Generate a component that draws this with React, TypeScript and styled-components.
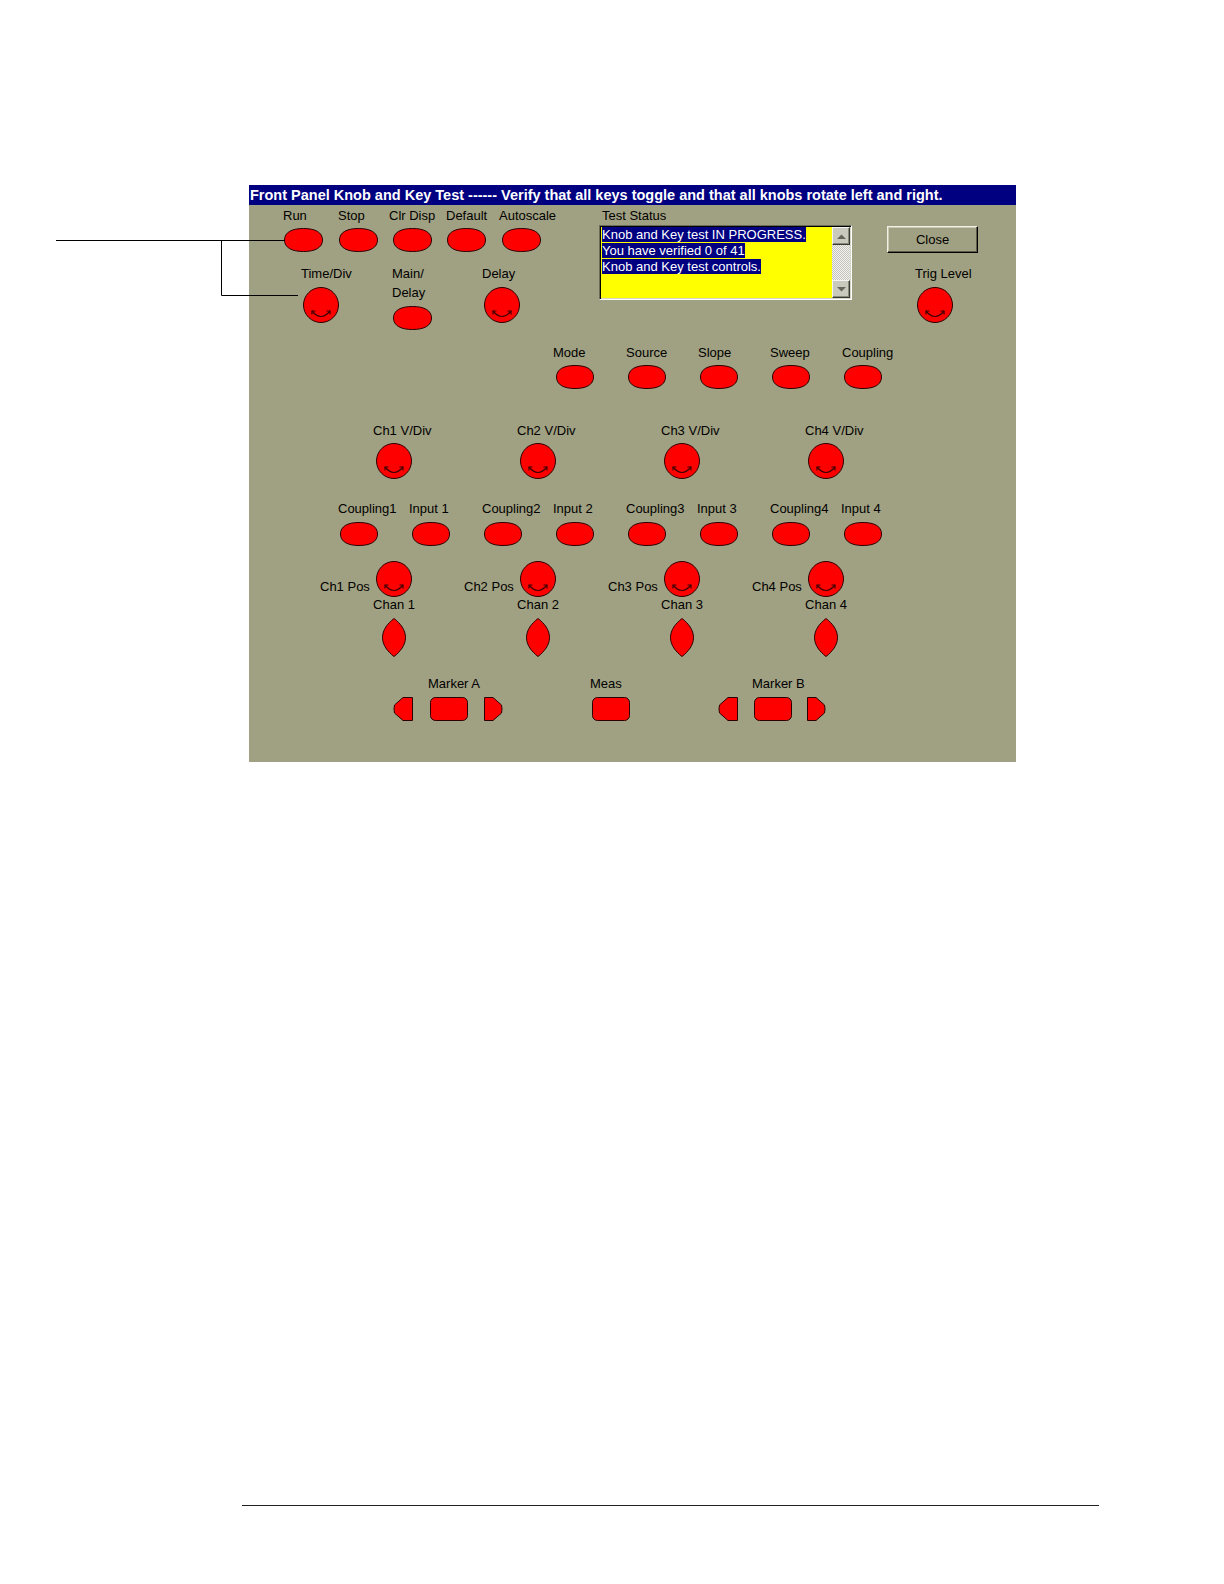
import React from "react";
import styled, { createGlobalStyle } from "styled-components";

const PANEL_BG = "#a0a082";
const RED = "#ff0000";
const EDGE = "#2a0000";
const ARROW = "#3a0000";

const GlobalStyle = createGlobalStyle`
  html, body {
    margin: 0;
    padding: 0;
    background: #ffffff;
  }
  body {
    font-family: "Liberation Sans", Arial, sans-serif;
  }
`;

const Page = styled.div`
  position: relative;
  width: 1224px;
  height: 1584px;
  padding-top: 185px;
  box-sizing: border-box;
  overflow: hidden;
`;

const Callout = styled.svg`
  position: absolute;
  left: 0;
  top: 0;
  pointer-events: none;
`;

const Dialog = styled.div`
  margin-left: 249px;
  width: 767px;
  height: 577px;
  background: ${PANEL_BG};
  color: #000;
  font-size: 13px;
  line-height: 15px;
  overflow: hidden;
`;

const TitleBar = styled.div`
  height: 20px;
  padding-left: 1px;
  background: #000080;
  color: #ffffff;
  font-weight: bold;
  font-size: 14.5px;
  line-height: 20px;
  white-space: nowrap;
  overflow: hidden;
`;

const FooterRule = styled.div`
  margin-top: 743px;
  margin-left: 242px;
  width: 857px;
  height: 1px;
  background: #222;
`;

/* ---------- generic control cell ---------- */

const Cell = styled.div`
  display: flex;
  flex-direction: column;
  align-items: flex-start;
`;

const Caption = styled.span<{ $dx?: number; $lh?: number; $mt?: number }>`
  display: block;
  white-space: nowrap;
  margin-left: ${(p) => p.$dx ?? 0}px;
  margin-top: ${(p) => p.$mt ?? 0}px;
  line-height: ${(p) => p.$lh ?? 15}px;
`;

const Slot = styled.div<{ $dx?: number; $gap: number }>`
  margin-left: ${(p) => p.$dx ?? 0}px;
  margin-top: ${(p) => p.$gap}px;
  line-height: 0;
`;

const KeyGrid = styled.div<{ $cols: string; $pl: number; $mt?: number }>`
  display: grid;
  grid-template-columns: ${(p) => p.$cols};
  align-items: start;
  padding-left: ${(p) => p.$pl}px;
  margin-top: ${(p) => p.$mt ?? 0}px;
`;

type ControlProps = {
  label: React.ReactNode;
  ldx?: number;
  wdx?: number;
  gap?: number;
  lh?: number;
  lmt?: number;
  children: React.ReactNode;
};

function Control({ label, ldx = 0, wdx = 0, gap = 5, lh, lmt, children }: ControlProps) {
  return (
    <Cell>
      <Caption $dx={ldx} $lh={lh} $mt={lmt}>
        {label}
      </Caption>
      <Slot $dx={wdx} $gap={gap}>
        {children}
      </Slot>
    </Cell>
  );
}

/* ---------- drawn keys and knobs ---------- */

const Svg = styled.svg`
  display: block;
  overflow: visible;
`;

function OvalKey({ w = 39, h = 24 }: { w?: number; h?: number }) {
  // slightly squared ellipse, like the low-res Windows ellipse
  const k = 0.64;
  const cx = w / 2;
  const cy = h / 2;
  const rx = w / 2 - 0.5;
  const ry = h / 2 - 0.5;
  const d = [
    `M${cx},${cy - ry}`,
    `C${cx + rx * k},${cy - ry} ${cx + rx},${cy - ry * k} ${cx + rx},${cy}`,
    `C${cx + rx},${cy + ry * k} ${cx + rx * k},${cy + ry} ${cx},${cy + ry}`,
    `C${cx - rx * k},${cy + ry} ${cx - rx},${cy + ry * k} ${cx - rx},${cy}`,
    `C${cx - rx},${cy - ry * k} ${cx - rx * k},${cy - ry} ${cx},${cy - ry}`,
    "Z",
  ].join(" ");
  return (
    <Svg width={w} height={h} viewBox={`0 0 ${w} ${h}`}>
      <path d={d} fill={RED} stroke={EDGE} />
    </Svg>
  );
}

function Knob() {
  return (
    <Svg width={36} height={36} viewBox="0 0 36 36">
      <circle cx={18} cy={18} r={17.5} fill={RED} stroke={EDGE} />
      <path d="M9,24 Q18,35 27,24" fill="none" stroke={ARROW} strokeWidth={1.2} />
      <path d="M12.5,24 L9,24 L9,27.5" fill="none" stroke={ARROW} strokeWidth={1.2} />
      <path d="M23.5,24 L27,24 L27,27.5" fill="none" stroke={ARROW} strokeWidth={1.2} />
    </Svg>
  );
}

function LensKey() {
  return (
    <Svg width={24} height={39} viewBox="0 0 24 39">
      <path
        d="M12,0.5 C18.5,5.5 23.5,12 23.5,19.5 C23.5,27 18.5,33.5 12,38.5 C5.5,33.5 0.5,27 0.5,19.5 C0.5,12 5.5,5.5 12,0.5 Z"
        fill={RED}
        stroke={EDGE}
      />
    </Svg>
  );
}

function RectKey({ w = 38 }: { w?: number }) {
  return (
    <Svg width={w} height={24} viewBox={`0 0 ${w} 24`}>
      <rect x={0.5} y={0.5} width={w - 1} height={23} rx={5} ry={5} fill={RED} stroke={EDGE} />
    </Svg>
  );
}

function ArrowKey({ dir }: { dir: "left" | "right" }) {
  const w = dir === "left" ? 20 : 19;
  const d =
    dir === "left"
      ? "M19.5,0.5 L10,0.5 L1.5,8 Q0.5,12 1.5,16 L10,23.5 L19.5,23.5 Z"
      : "M0.5,0.5 L9,0.5 L17.5,8 Q18.5,12 17.5,16 L9,23.5 L0.5,23.5 Z";
  return (
    <Svg width={w} height={24} viewBox={`0 0 ${w} 24`}>
      <path d={d} fill={RED} stroke={EDGE} />
    </Svg>
  );
}

/* ---------- top area ---------- */

const TopArea = styled.div`
  display: flex;
  align-items: flex-start;
`;

const KeysCluster = styled.div`
  flex: none;
  width: 350px;
  padding-top: 3px;
`;

const StatusBlock = styled.div`
  flex: none;
  width: 253px;
  padding-top: 3px;
`;

const ListBox = styled.div`
  margin-top: 2px;
  width: 253px;
  height: 75px;
  box-sizing: border-box;
  display: flex;
  border: 1px solid;
  border-color: #6b6b5a #ffffff #ffffff #6b6b5a;
  box-shadow: inset 1px 1px 0 #000000, inset -1px -1px 0 #d6d6c8;
  background: #ffff00;
`;

const ListText = styled.div`
  flex: 1;
  padding: 1px 0 0 2px;
  line-height: 16px;
`;

const ListLine = styled.div`
  white-space: nowrap;
  span {
    background: #000080;
    color: #ffffff;
  }
`;

const ScrollBar = styled.div`
  flex: none;
  width: 18px;
  margin: 1px 1px 1px 0;
  display: flex;
  flex-direction: column;
`;

const ScrollTrack = styled.div`
  flex: 1;
  background: repeating-conic-gradient(#c4c4bc 0 25%, #f2f2ee 0 50%) 0 0 / 2px 2px;
`;

const ScrollButton = styled.div`
  height: 18px;
  box-sizing: border-box;
  display: flex;
  align-items: center;
  justify-content: center;
  background: #c9c9be;
  border: 1px solid;
  border-color: #f4f4f0 #3a3a30 #3a3a30 #f4f4f0;
  box-shadow: inset -1px -1px 0 #8a8a7c;
`;

function ScrollArrow({ up }: { up?: boolean }) {
  return (
    <ScrollButton>
      <svg width={9} height={5} viewBox="0 0 9 5">
        <path d={up ? "M0,5 L4.5,0.5 L9,5 Z" : "M0,0 L4.5,4.5 L9,0 Z"} fill="#66665c" />
      </svg>
    </ScrollButton>
  );
}

const SideBlock = styled.div`
  flex: none;
  margin-left: 35px;
  padding-top: 21px;
  display: flex;
  flex-direction: column;
  align-items: flex-start;
`;

const CloseButton = styled.div`
  width: 91px;
  height: 27px;
  box-sizing: border-box;
  display: flex;
  align-items: center;
  justify-content: center;
  background: ${PANEL_BG};
  border: 1px solid;
  border-color: #f0f0e4 #000000 #000000 #f0f0e4;
  box-shadow: inset -1px -1px 0 #5c5c48, inset 1px 1px 0 #c8c8b4;
  font-size: 13px;
`;

/* ---------- lower rows ---------- */

const ChannelBank = styled.div`
  display: flex;
  padding-left: 71px;
  margin-top: 33.5px;
`;

const Strip = styled.div`
  flex: none;
  width: 144px;
  display: flex;
  flex-direction: column;
`;

const PosRow = styled.div`
  display: grid;
  grid-template-columns: 54px 40px;
  align-items: start;
  margin-top: 15px;
`;

const KnobStack = styled.div`
  display: flex;
  flex-direction: column;
  align-items: center;
  line-height: 15px;
`;

const LensSlot = styled.div`
  margin-top: 6px;
  line-height: 0;
`;

const KeyCluster = styled.div`
  display: flex;
  align-items: flex-start;
`;

const Spaced = styled.div<{ $ml: number }>`
  margin-left: ${(p) => p.$ml}px;
`;

const topKeys = [
  { label: "Run", wdx: 1 },
  { label: "Stop", wdx: 1 },
  { label: "Clr Disp", wdx: 4 },
  { label: "Default", wdx: 1 },
  { label: "Autoscale", wdx: 3 },
];

const triggerKeys = [
  { label: "Mode", wdx: 3 },
  { label: "Source", wdx: 2 },
  { label: "Slope", wdx: 2 },
  { label: "Sweep", wdx: 2 },
  { label: "Coupling", wdx: 2 },
];

const statusLines = [
  "Knob and Key test IN PROGRESS.",
  "You have verified 0 of 41",
  "Knob and Key test controls.",
];

function ChannelStrip({ n }: { n: number }) {
  return (
    <Strip>
      <Control label={`Ch${n} V/Div`} ldx={53} wdx={56} gap={5.5}>
        <Knob />
      </Control>
      <KeyGrid $cols="71px auto" $pl={18} $mt={21.5}>
        <Control label={`Coupling${n}`} wdx={2} gap={6.5}>
          <OvalKey w={38} />
        </Control>
        <Control label={`Input ${n}`} wdx={3} gap={6.5}>
          <OvalKey w={38} />
        </Control>
      </KeyGrid>
      <PosRow>
        <Caption $mt={17.5}>{`Ch${n} Pos`}</Caption>
        <KnobStack>
          <Knob />
          <Caption>{`Chan ${n}`}</Caption>
          <LensSlot>
            <LensKey />
          </LensSlot>
        </KnobStack>
      </PosRow>
    </Strip>
  );
}

function MarkerKeys({ gaps }: { gaps: [number, number] }) {
  return (
    <KeyCluster>
      <ArrowKey dir="left" />
      <Spaced $ml={gaps[0]}>
        <RectKey w={38} />
      </Spaced>
      <Spaced $ml={gaps[1]}>
        <ArrowKey dir="right" />
      </Spaced>
    </KeyCluster>
  );
}

export default function App() {
  return (
    <>
      <GlobalStyle />
      <Page>
        <Dialog>
          <TitleBar>
            Front Panel Knob and Key Test ------ Verify that all keys toggle and that all knobs rotate left and right.
          </TitleBar>

          <TopArea>
            <KeysCluster>
              <KeyGrid $cols="55px 51px 57px 53px auto" $pl={34}>
                {topKeys.map((k) => (
                  <Control key={k.label} label={k.label} wdx={k.wdx} gap={5}>
                    <OvalKey />
                  </Control>
                ))}
              </KeyGrid>
              <KeyGrid $cols="91px 90px auto" $pl={52} $mt={13.5}>
                <Control label="Time/Div" wdx={2} gap={6.5}>
                  <Knob />
                </Control>
                <Control
                  label={
                    <>
                      Main/
                      <br />
                      Delay
                    </>
                  }
                  lh={19}
                  lmt={-2}
                  wdx={1}
                  gap={4.5}
                >
                  <OvalKey />
                </Control>
                <Control label="Delay" wdx={2} gap={6.5}>
                  <Knob />
                </Control>
              </KeyGrid>
            </KeysCluster>

            <StatusBlock>
              <Caption $dx={3}>Test Status</Caption>
              <ListBox>
                <ListText>
                  {statusLines.map((l) => (
                    <ListLine key={l}>
                      <span>{l}</span>
                    </ListLine>
                  ))}
                </ListText>
                <ScrollBar>
                  <ScrollArrow up />
                  <ScrollTrack />
                  <ScrollArrow />
                </ScrollBar>
              </ListBox>
            </StatusBlock>

            <SideBlock>
              <CloseButton>Close</CloseButton>
              <Caption $dx={28} $mt={12.5}>
                Trig Level
              </Caption>
              <Slot $dx={30} $gap={6.5}>
                <Knob />
              </Slot>
            </SideBlock>
          </TopArea>

          <KeyGrid $cols="73px 72px 72px 72px auto" $pl={304} $mt={14.5}>
            {triggerKeys.map((k) => (
              <Control key={k.label} label={k.label} wdx={k.wdx} gap={5.5}>
                <OvalKey w={38} />
              </Control>
            ))}
          </KeyGrid>

          <ChannelBank>
            {[1, 2, 3, 4].map((n) => (
              <ChannelStrip key={n} n={n} />
            ))}
          </ChannelBank>

          <KeyGrid $cols="197px 128px auto" $pl={144} $mt={18.5}>
            <Control label="Marker A" ldx={35} gap={6.5}>
              <MarkerKeys gaps={[17, 16]} />
            </Control>
            <Control label="Meas" wdx={2} gap={6.5}>
              <RectKey w={38} />
            </Control>
            <Control label="Marker B" ldx={34} gap={6.5}>
              <MarkerKeys gaps={[16, 15]} />
            </Control>
          </KeyGrid>
        </Dialog>

        <FooterRule />

        <Callout width={320} height={320} viewBox="0 0 320 320">
          <path
            d="M56,240.5 L285,240.5 M221.5,240.5 L221.5,295.5 L298,295.5"
            fill="none"
            stroke="#000"
            strokeWidth={1}
          />
        </Callout>
      </Page>
    </>
  );
}
